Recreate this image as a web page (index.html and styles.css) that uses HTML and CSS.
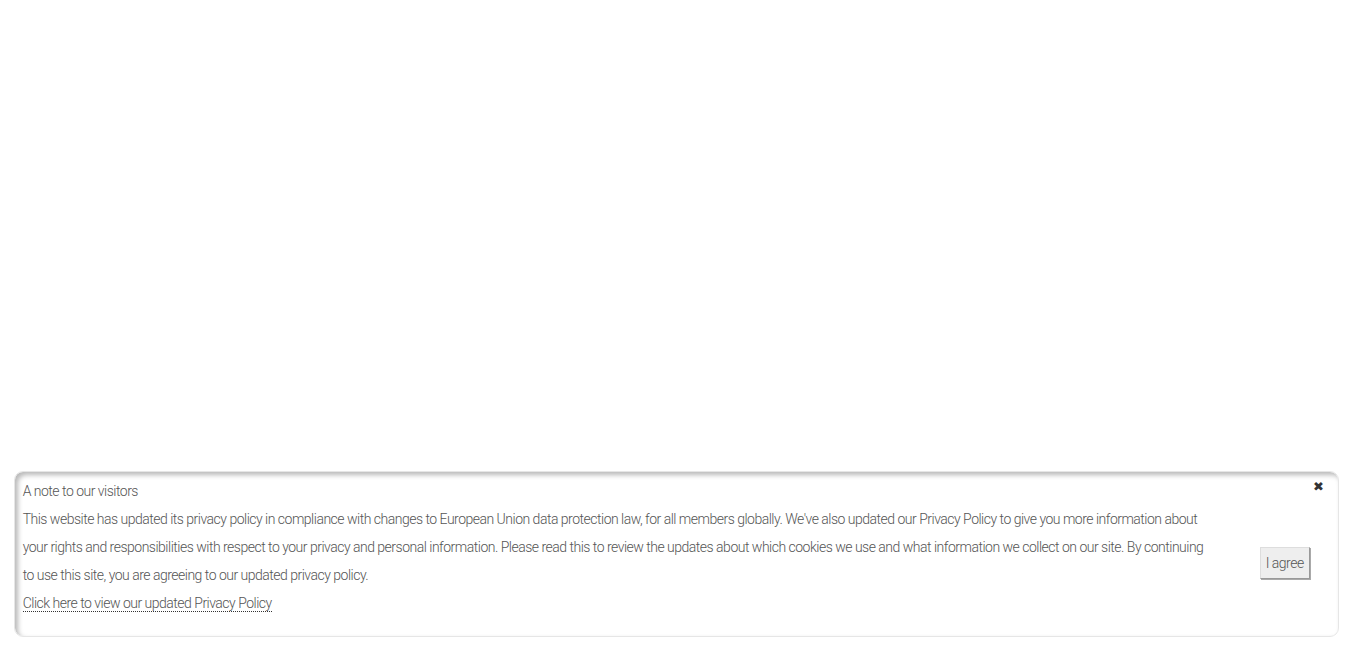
FILE: index.html
```html
<!DOCTYPE html>
<html lang="en">
<head>
<meta charset="utf-8">
<title>Privacy notice</title>
<link rel="stylesheet" href="styles.css">
</head>
<body>
<div class="notice">
  <div class="notice-text">
    <p class="title">A note to our visitors</p>
    <p class="body">This website has updated its privacy policy in compliance with changes to European Union data protection law, for all members globally. We've also updated our Privacy Policy to give you more information about your rights and responsibilities with respect to your privacy and personal information. Please read this to review the updates about which cookies we use and what information we collect on our site. By continuing to use this site, you are agreeing to our updated privacy policy.</p>
    <p class="link-row"><a class="policy-link" href="#">Click here to view our updated Privacy Policy</a></p>
  </div>
  <div class="notice-actions">
    <button class="agree" type="button">I agree</button>
  </div>
  <span class="close">&#10006;</span>
</div>
</body>
</html>
```
FILE: styles.css
```css
html, body {
  margin: 0;
  padding: 0;
  background: #fff;
}
body {
  font-family: Roboto, "Liberation Sans", sans-serif;
  font-weight: 300;
  font-size: 14px;
  letter-spacing: -0.5px;
  color: #555;
}
.notice {
  position: fixed;
  left: 1%;
  bottom: 14px;
  width: 97%;
  box-sizing: border-box;
  height: 166px;
  display: flex;
  align-items: center;
  padding: 0 28px 0 8px;
  background: #fff;
  border: 1px solid #e6e6e6;
  border-radius: 9px;
  box-shadow: inset 3px 3px 5px rgba(0,0,0,0.28);
}
.notice-text {
  width: 1192px;
  align-self: flex-start;
  padding-top: 5px;
  line-height: 28px;
}
.notice-text p {
  margin: 0;
}
.policy-link {
  color: #555;
  text-decoration: none;
  border-bottom: 1px dotted #333;
}
.notice-actions {
  flex: 1;
  display: flex;
  justify-content: flex-end;
  padding-top: 17px;
}
.agree {
  font-family: inherit;
  font-weight: 300;
  font-size: 14px;
  letter-spacing: -0.5px;
  color: #555;
  background: #eee;
  border: 1px solid #ddd;
  border-right-color: #999;
  border-bottom-color: #999;
  box-shadow: 1px 1px 0 #aaa;
  padding: 7px 5px;
}
.close {
  position: absolute;
  top: 7px;
  right: 14px;
  font-size: 13px;
  letter-spacing: 0;
  color: #333;
}
```
